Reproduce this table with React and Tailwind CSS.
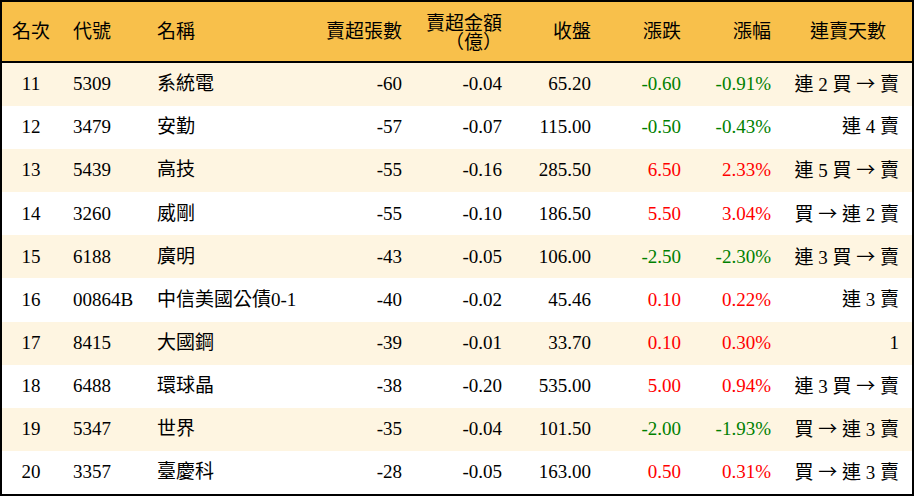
const rows = [
  { rank: 11, code: "5309", name: "系統電", lots: "-60", amt: "-0.04", close: "65.20", chg: "-0.60", pct: "-0.91%", days: "連 2 買 → 賣" },
  { rank: 12, code: "3479", name: "安勤", lots: "-57", amt: "-0.07", close: "115.00", chg: "-0.50", pct: "-0.43%", days: "連 4 賣" },
  { rank: 13, code: "5439", name: "高技", lots: "-55", amt: "-0.16", close: "285.50", chg: "6.50", pct: "2.33%", days: "連 5 買 → 賣" },
  { rank: 14, code: "3260", name: "威剛", lots: "-55", amt: "-0.10", close: "186.50", chg: "5.50", pct: "3.04%", days: "買 → 連 2 賣" },
  { rank: 15, code: "6188", name: "廣明", lots: "-43", amt: "-0.05", close: "106.00", chg: "-2.50", pct: "-2.30%", days: "連 3 買 → 賣" },
  { rank: 16, code: "00864B", name: "中信美國公債0-1", lots: "-40", amt: "-0.02", close: "45.46", chg: "0.10", pct: "0.22%", days: "連 3 賣" },
  { rank: 17, code: "8415", name: "大國鋼", lots: "-39", amt: "-0.01", close: "33.70", chg: "0.10", pct: "0.30%", days: "1" },
  { rank: 18, code: "6488", name: "環球晶", lots: "-38", amt: "-0.20", close: "535.00", chg: "5.00", pct: "0.94%", days: "連 3 買 → 賣" },
  { rank: 19, code: "5347", name: "世界", lots: "-35", amt: "-0.04", close: "101.50", chg: "-2.00", pct: "-1.93%", days: "買 → 連 3 賣" },
  { rank: 20, code: "3357", name: "臺慶科", lots: "-28", amt: "-0.05", close: "163.00", chg: "0.50", pct: "0.31%", days: "買 → 連 3 賣" },
]

const grid = "grid grid-cols-[58px_97px_165px_80px_100px_89px_90px_90px_141px]"

// arrow drawn wide like the reference (full-width glyph)
const Days = ({ text }) => {
  const parts = text.split("→")
  return (
    <>
      {parts.map((p, i) => (
        <span key={i}>
          {i > 0 && <span className="font-['Noto_Sans_CJK_TC',sans-serif]">→</span>}
          {p}
        </span>
      ))}
    </>
  )
}

const App = () => {
  return (
    <div className="w-[914px] h-[496px] border-2 border-black bg-white text-black text-[19px] font-['Liberation_Serif','Noto_Sans_CJK_TC',serif] overflow-hidden">
      <div className={grid + " h-[61px] bg-[#f8c04b] border-b-2 border-black items-center pt-[2px] whitespace-nowrap"}>
        <div className="text-center">名次</div>
        <div className="pl-[13px]">代號</div>
        <div>名稱</div>
        <div className="text-right">賣超張數</div>
        <div className="text-right leading-[19px]">
          <div>賣超金額</div>
          <div>（億）</div>
        </div>
        <div className="text-right">收盤</div>
        <div className="text-right">漲跌</div>
        <div className="text-right">漲幅</div>
        <div className="text-right pr-[26px]">連賣天數</div>
      </div>
      {rows.map((item, index) => {
        const up = !item.chg.startsWith("-")
        const color = up ? "text-[#ff0000]" : "text-[#008000]"
        return (
          <div
            key={index}
            className={grid + " h-[43.1px] items-center " + (index % 2 === 0 ? "bg-[#fef5e1]" : "bg-white")}
          >
            <div className="text-center">{item.rank}</div>
            <div className="pl-[13px]">{item.code}</div>
            <div className="whitespace-nowrap">{item.name}</div>
            <div className="text-right">{item.lots}</div>
            <div className="text-right">{item.amt}</div>
            <div className="text-right">{item.close}</div>
            <div className={"text-right " + color}>{item.chg}</div>
            <div className={"text-right " + color}>{item.pct}</div>
            <div className="text-right pr-[13px] whitespace-nowrap">
              <Days text={item.days} />
            </div>
          </div>
        )
      })}
    </div>
  )
}
export default App
